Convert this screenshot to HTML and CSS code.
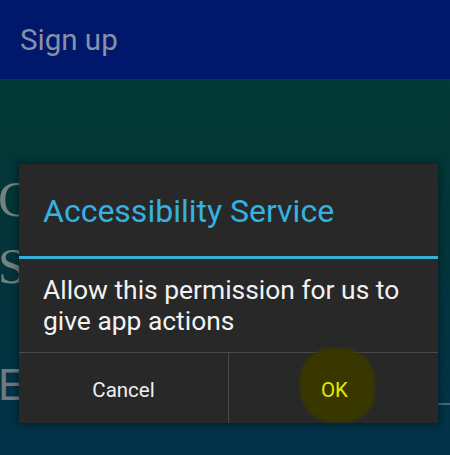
FILE: index.html
```html
<!DOCTYPE html>
<html>
<head>
<meta charset="utf-8">
<link rel="stylesheet" href="styles.css">
</head>
<body>
<div class="screen">
  <header class="appbar"><span class="appbar-title">Sign up</span></header>
  <main class="content">
    <div class="bg-letter bg-c">C</div>
    <div class="bg-letter bg-s">S</div>
    <div class="bg-letter bg-e">E</div>
    <div class="bg-underline"></div>
    <div class="dialog">
      <div class="dialog-title">Accessibility Service</div>
      <div class="dialog-rule"></div>
      <div class="dialog-body">Allow this permission for us to give app actions</div>
      <div class="dialog-buttons">
        <button class="dlg-btn cancel">Cancel</button>
        <button class="dlg-btn ok"><span class="ok-glow"></span><span class="ok-label">OK</span></button>
      </div>
    </div>
  </main>
</div>
</body>
</html>
```
FILE: styles.css
```css
html, body {
  margin: 0;
  padding: 0;
  background: #00324a;
}
.screen {
  width: 450px;
  height: 455px;
  display: flex;
  flex-direction: column;
  overflow: hidden;
  font-family: Roboto, "Liberation Sans", sans-serif;
}
.appbar {
  height: 79px;
  background: #00186b;
  display: flex;
  align-items: center;
  padding: 1px 0 0 20px;
  box-sizing: border-box;
  flex: none;
}
.appbar-title {
  font-size: 29.5px;
  color: #8990a4;
}
.content {
  position: relative;
  flex: 1;
  background: linear-gradient(180deg, #023a36 0%, #033438 40%, #01324a 100%);
  display: flex;
  flex-direction: column;
}
.bg-letter {
  font-family: "Liberation Serif", serif;
  font-size: 51px;
  color: #74817f;
  line-height: 1;
  margin-left: -2px;
}
.bg-c { margin-top: 95px; }
.bg-s { margin-top: 16px; }
.bg-e { margin-top: 71px; font-family: "Liberation Sans", sans-serif; font-size: 44px; color: #6f7a80; }
.bg-underline {
  margin: -4px 0 0 40px;
  height: 2px;
  background: #4f6470;
}
.dialog {
  position: absolute;
  left: 19px;
  top: 85px;
  width: 419px;
  height: 259px;
  background: #282828;
  box-shadow: 0 0 6px 2px rgba(0,0,0,0.35);
  display: flex;
  flex-direction: column;
}
.dialog-title {
  height: 92px;
  display: flex;
  align-items: center;
  padding: 1px 24px 0;
  box-sizing: border-box;
  font-size: 32px;
  color: #33b3e1;
  flex: none;
}
.dialog-rule {
  height: 3px;
  background: #36aed8;
  flex: none;
}
.dialog-body {
  padding: 16px 24px 0;
  height: 94px;
  box-sizing: border-box;
  font-size: 26.4px;
  line-height: 31px;
  color: #f2f2f2;
  border-bottom: 1px solid #4a4a4a;
  flex: none;
}
.dialog-buttons {
  flex: 1;
  display: grid;
  grid-template-columns: 210px 1fr;
}
.dlg-btn {
  background: transparent;
  border: 0;
  font-family: Roboto, "Liberation Sans", sans-serif;
  font-size: 20.5px;
  color: #f0f0f0;
  display: flex;
  align-items: center;
  justify-content: center;
  padding: 3px 0 0 0;
  position: relative;
}
.cancel {
  border-right: 1px solid #4a4a4a;
}
.ok { color: #e6e600; padding-left: 2px; }
.ok-label { position: relative; }
.ok-glow {
  position: absolute;
  left: 71px;
  top: -5px;
  width: 75px;
  height: 74px;
  border-radius: 42% 45% 40% 44%;
  background: #383700;
  filter: blur(1.5px);
}
```
